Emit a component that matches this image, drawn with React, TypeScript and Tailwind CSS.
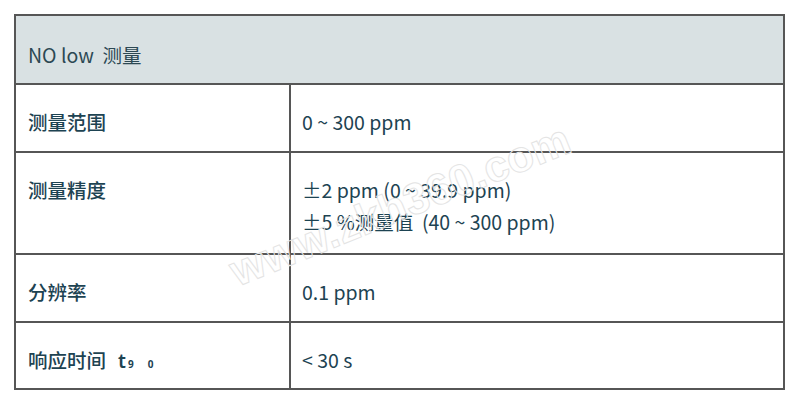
import React from 'react';

const font = { fontFamily: '"Noto Sans CJK SC", "Noto Sans", sans-serif' };

interface Row {
  label: React.ReactNode;
  lines: string[];
  height: string;
}

const rows: Row[] = [
  { label: '测量范围', lines: ['0 ~ 300 ppm'], height: 'h-[68px]' },
  { label: '测量精度', lines: ['±2 ppm (0 ~ 39.9 ppm)', '±5 %测量值  (40 ~ 300 ppm)'], height: 'h-[102px]' },
  { label: '分辨率', lines: ['0.1 ppm'], height: 'h-[68px]' },
  {
    label: (
      <>
        响应时间<span className="ml-[12px] font-semibold [font-family:'Noto_Sans',sans-serif]">t</span>
        <span className="ml-[2px] text-[10px] font-bold [font-family:'Noto_Sans',sans-serif]">9</span>
        <span className="ml-[14px] text-[10px] font-bold [font-family:'Noto_Sans',sans-serif]">0</span>
      </>
    ),
    lines: ['< 30 s'],
    height: 'h-[67px]',
  },
];

export default function App() {
  return (
    <div className="relative w-[800px] h-[403px] bg-white overflow-hidden" style={font}>
      <div className="ml-[14px] mt-[14px] w-[771px] border-2 border-[#565656] text-[19.5px] font-medium leading-[32px] text-[#1d4352]">
        <div className="h-[67px] bg-[#d9e1e3] pl-[12px] pt-[23px] font-normal text-[#2c4853] whitespace-pre">NO low  测量</div>
        {rows.map((r, i) => (
          <div key={i} className={`grid grid-cols-[275px_1fr] border-t-2 border-[#565656] ${r.height}`}>
            <div className="border-r-2 border-[#565656] pl-[12px] pt-[21px] whitespace-pre">{r.label}</div>
            <div className="pl-[11px] pt-[21px] font-normal">
              {r.lines.map((l) => (
                <div key={l} className="whitespace-pre">{l}</div>
              ))}
            </div>
          </div>
        ))}
      </div>

      {/* watermark */}
      <div className="pointer-events-none absolute left-[400px] top-[205px] -translate-x-1/2 -translate-y-1/2 -rotate-[22deg] whitespace-nowrap text-[44px] font-bold text-transparent [-webkit-text-stroke:1px_#e4e4e4] [font-family:'Liberation_Sans',sans-serif]">
        www.zkh360.com
      </div>
    </div>
  );
}
